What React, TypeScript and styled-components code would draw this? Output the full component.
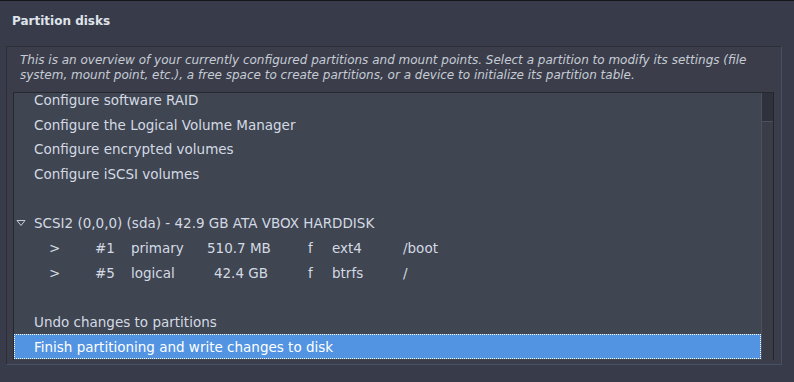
import React from 'react';
import styled, { createGlobalStyle } from 'styled-components';

const GlobalStyle = createGlobalStyle`
  html, body {
    margin: 0;
    padding: 0;
    background: #383c4a;
  }
  body {
    font-family: 'DejaVu Sans', 'Liberation Sans', sans-serif;
    color: #d3dae3;
  }
`;

const Window = styled.div`
  width: 794px;
  height: 382px;
  display: flex;
  flex-direction: column;
  background: #383c4a;
  overflow: hidden;
`;

const TopEdge = styled.div`
  height: 1px;
  background: #15161a;
`;

const Header = styled.div`
  height: 45px;
  padding: 12px 0 0 12px;
  box-sizing: border-box;
`;

const Title = styled.h1`
  margin: 0;
  font-size: 12px;
  line-height: 16px;
  font-weight: bold;
  color: #dfe3ea;
`;

const Frame = styled.div`
  margin: 0 12px 0 6px;
  height: 319px;
  box-sizing: border-box;
  background: #3b3e4a;
  border-top: 1px solid #2b2e37;
  border-left: 1px solid #2b2e37;
  border-right: 1px solid #465066;
  border-bottom: 1px solid #465066;
  display: flex;
  flex-direction: column;
`;

const Description = styled.p`
  margin: 0;
  padding: 6px 0 0 13px;
  height: 45px;
  box-sizing: border-box;
  font-size: 12px;
  line-height: 15px;
  font-style: italic;
  white-space: nowrap;
  color: #c6ccd6;
`;

const ListBox = styled.div`
  margin: 0 7px 0 6px;
  height: 268px;
  box-sizing: border-box;
  background: #404552;
  border-top: 1px solid #262830;
  border-left: 1px solid #262830;
  display: flex;
`;

const Rows = styled.div`
  flex: 1;
  overflow: hidden;
`;

const RowsInner = styled.div`
  margin-top: -5.4px;
`;

const Row = styled.div<{ $selected?: boolean }>`
  height: 24.7px;
  box-sizing: border-box;
  display: flex;
  align-items: center;
  padding-left: 20px;
  font-size: 13.5px;
  white-space: nowrap;
  color: ${(p) => (p.$selected ? '#ffffff' : '#d3dae3')};
  background: ${(p) => (p.$selected ? '#5294e2' : 'transparent')};
  outline: ${(p) => (p.$selected ? '1px dotted #ffffff' : 'none')};
  outline-offset: -1px;
`;

const DiskRow = styled(Row)`
  padding-left: 2px;
  gap: 8px;
`;

const PartRow = styled.div`
  height: 24.7px;
  display: grid;
  grid-template-columns: 46px 36px 76px 61px 40px 24px 71px auto;
  align-items: center;
  padding-left: 35px;
  font-size: 13.5px;
  white-space: nowrap;
  color: #d3dae3;
`;

const Cell = styled.span<{ $right?: boolean }>`
  text-align: ${(p) => (p.$right ? 'right' : 'left')};
`;

const Scrollbar = styled.div`
  width: 13px;
  box-sizing: border-box;
  background: #3a3d48;
  border-left: 1px solid #4a5062;
  border-right: 1px solid #24262d;
  display: flex;
  flex-direction: column;
`;

const Thumb = styled.div`
  height: 28px;
  background: #2f323c;
  border-bottom: 1px solid #4a5062;
`;

const Expander = () => (
  <svg width="10" height="8" viewBox="0 0 10 8">
    <polygon points="1,1.5 9,1.5 5,6.5" fill="none" stroke="#c6ccd6" strokeWidth="1" />
  </svg>
);

const partitions = [
  { num: '#1', type: 'primary', size: '510.7 MB', flag: 'f', fs: 'ext4', mount: '/boot' },
  { num: '#5', type: 'logical', size: '42.4 GB', flag: 'f', fs: 'btrfs', mount: '/' },
];

const App = () => (
  <Window>
    <GlobalStyle />
    <TopEdge />
    <Header>
      <Title>Partition disks</Title>
    </Header>
    <Frame>
      <Description>
        This is an overview of your currently configured partitions and mount points. Select a partition to modify its settings (file
        <br />
        system, mount point, etc.), a free space to create partitions, or a device to initialize its partition table.
      </Description>
      <ListBox>
        <Rows>
          <RowsInner>
            <Row>Configure software RAID</Row>
            <Row>Configure the Logical Volume Manager</Row>
            <Row>Configure encrypted volumes</Row>
            <Row>Configure iSCSI volumes</Row>
            <Row />
            <DiskRow>
              <Expander />
              SCSI2 (0,0,0) (sda) - 42.9 GB ATA VBOX HARDDISK
            </DiskRow>
            {partitions.map((p) => (
              <PartRow key={p.num}>
                <Cell>&gt;</Cell>
                <Cell>{p.num}</Cell>
                <Cell>{p.type}</Cell>
                <Cell $right>{p.size}</Cell>
                <Cell />
                <Cell>{p.flag}</Cell>
                <Cell>{p.fs}</Cell>
                <Cell>{p.mount}</Cell>
              </PartRow>
            ))}
            <Row />
            <Row>Undo changes to partitions</Row>
            <Row $selected>Finish partitioning and write changes to disk</Row>
          </RowsInner>
        </Rows>
        <Scrollbar>
          <Thumb />
        </Scrollbar>
      </ListBox>
    </Frame>
  </Window>
);

export default App;
